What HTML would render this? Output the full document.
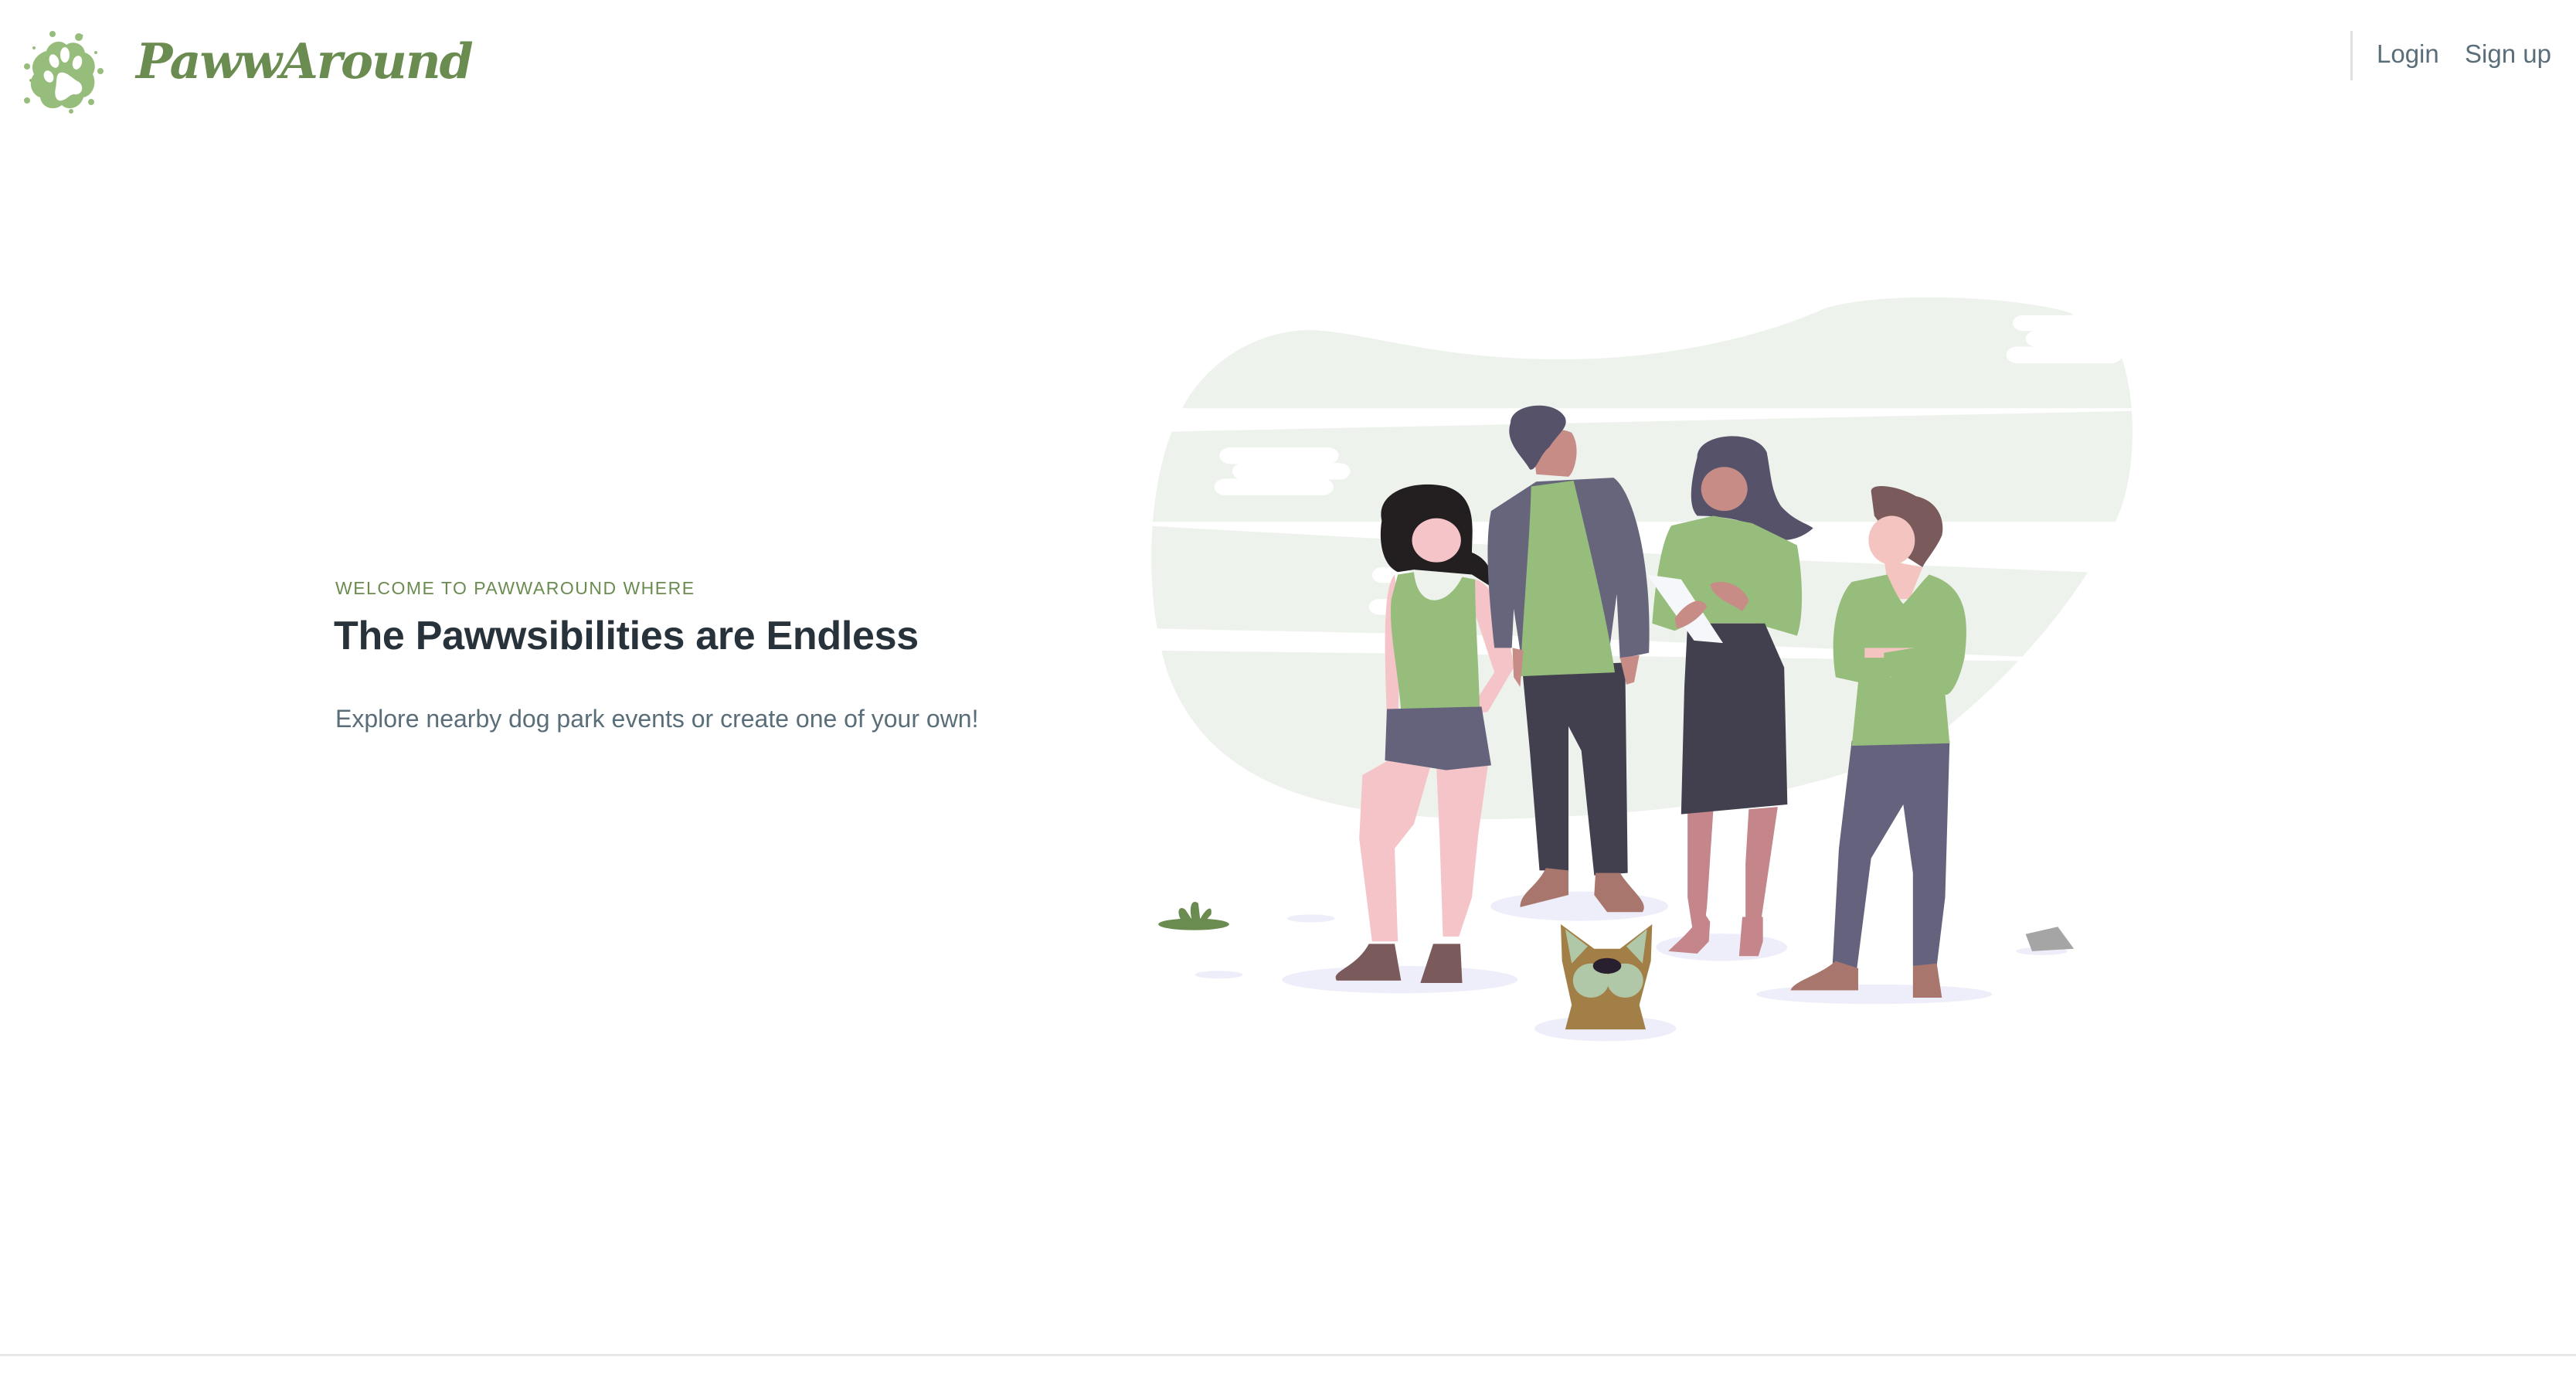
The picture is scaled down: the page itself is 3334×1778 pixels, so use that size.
<!DOCTYPE html>
<html><head><meta charset="utf-8"><style>
*{margin:0;padding:0;box-sizing:border-box}
html,body{width:3334px;height:1778px;background:#fff;overflow:hidden;position:relative;font-family:"Liberation Sans",sans-serif}
.logo-text{position:absolute;left:176px;top:24px;font-family:"DejaVu Serif","Liberation Serif",serif;font-style:italic;font-weight:bold;font-size:63px;color:#6a8c50;letter-spacing:-2px;line-height:110px}
.sep{position:absolute;left:3042px;top:40px;width:3px;height:64px;background:#e0e0e0}
.nav{position:absolute;top:46px;font-size:33px;color:#5a6e7a;line-height:48px}
.kicker{position:absolute;left:434px;top:746px;font-size:23px;letter-spacing:1.5px;color:#6a8c50;line-height:30px}
h1{position:absolute;left:432px;top:788px;font-size:52px;font-weight:bold;color:#28323a;line-height:70px;letter-spacing:-0.3px;white-space:nowrap}
.sub{position:absolute;left:434px;top:908px;font-size:32px;color:#5a6e7a;line-height:44px;white-space:nowrap}
.bottom{position:absolute;left:0;top:1752px;width:3334px;height:3px;background:#e8e8e8}
</style></head><body>
<svg style="position:absolute;left:30px;top:36px" width="110" height="112" viewBox="0 0 110 112">
<g fill="#97bd7c">
<path d="M30,30 C34,18 48,14 56,22 C64,16 78,20 80,32 C92,36 96,50 90,60 C96,72 90,88 78,90 C74,104 58,108 50,100 C40,108 24,104 22,90 C10,86 6,70 14,60 C8,48 16,34 30,30Z"/>
<circle cx="38" cy="8" r="4"/><circle cx="72" cy="12" r="5"/><circle cx="5" cy="50" r="4"/><circle cx="100" cy="56" r="4"/><circle cx="5" cy="94" r="4"/><circle cx="88" cy="96" r="4"/><circle cx="62" cy="108" r="3"/><circle cx="14" cy="26" r="2"/><circle cx="94" cy="32" r="2"/><circle cx="10" cy="68" r="2"/><circle cx="28" cy="98" r="1.5"/><circle cx="76" cy="10" r="1.5"/>
</g>
<g fill="#fff">
<ellipse cx="54" cy="35" rx="6" ry="10"/><ellipse cx="40" cy="43" rx="6" ry="9" transform="rotate(-20 40 43)"/><ellipse cx="70" cy="45" rx="6" ry="9" transform="rotate(15 70 45)"/><ellipse cx="33" cy="63" rx="6" ry="8" transform="rotate(-25 33 63)"/>
<path d="M48,58 C56,56 64,66 72,70 C80,76 76,88 66,86 C60,86 58,92 50,94 C42,96 40,86 42,78 C44,68 42,60 48,58Z"/>
</g>
</svg>
<div class="logo-text">PawwAround</div>
<div class="sep"></div>
<div class="nav" style="left:3076px">Login</div>
<div class="nav" style="left:3190px">Sign up</div>

<div class="kicker">WELCOME TO PAWWAROUND WHERE</div>
<h1>The Pawwsibilities are Endless</h1>
<div class="sub">Explore nearby dog park events or create one of your own!</div>

<svg style="position:absolute;left:1480px;top:370px" width="1300" height="990" viewBox="0 0 1560 1564" preserveAspectRatio="none">
<path d="M60,250 C100,150 180,90 260,90 C350,95 450,150 650,150 C800,150 950,110 1060,45 C1150,10 1350,20 1440,55 L1520,150 C1545,250 1540,400 1510,480 C1470,600 1380,760 1250,900 C1100,1030 850,1080 550,1090 C250,1090 100,1000 40,800 C0,650 0,400 60,250Z" fill="#eef2ec"/>
<g fill="#fff">
<polygon points="0,250 1560,250 1560,255 40,298 0,298"/>
<polygon points="0,482 1560,482 1560,490 1480,586 900,555 0,490"/>
<polygon points="0,700 600,716 1400,760 1560,760 1560,770 0,745"/>
<rect x="1350" y="60" width="200" height="32" rx="16"/><rect x="1370" y="92" width="180" height="32" rx="16"/><rect x="1340" y="124" width="180" height="34" rx="17"/>
<rect x="118" y="330" width="185" height="34" rx="17"/><rect x="138" y="362" width="183" height="34" rx="17"/><rect x="110" y="394" width="185" height="34" rx="17"/>
<rect x="355" y="575" width="60" height="32" rx="16"/><rect x="350" y="640" width="60" height="32" rx="16"/>
</g>
<g fill="#eeeefa">
<ellipse cx="398" cy="1418" rx="183" ry="28"/><ellipse cx="677" cy="1268" rx="138" ry="30"/><ellipse cx="898" cy="1352" rx="102" ry="28"/><ellipse cx="1135" cy="1448" rx="183" ry="20"/><ellipse cx="717" cy="1518" rx="110" ry="26"/><ellipse cx="260" cy="1293" rx="37" ry="8"/><ellipse cx="117" cy="1408" rx="37" ry="8"/><ellipse cx="1395" cy="1360" rx="40" ry="8"/>
</g>
<ellipse cx="78" cy="1305" rx="55" ry="12" fill="#6a8c50"/>
<path d="M60,1300 C50,1280 55,1265 65,1275 L75,1295 C70,1270 75,1252 85,1262 L88,1295 C95,1275 108,1262 105,1285 L95,1300Z" fill="#6a8c50"/>
<path d="M1370,1325 L1420,1310 L1445,1355 L1380,1360Z" fill="#a5a5a5"/>
<!-- woman 1 -->
<path d="M340,1000 L380,970 L445,985 L420,1100 L390,1150 L395,1340 L355,1340 L335,1130Z" fill="#f4c4c8"/>
<path d="M455,985 L535,980 L520,1120 L510,1250 L490,1330 L465,1330 L460,1130Z" fill="#f4c4c8"/>
<path d="M300,1420 C290,1400 330,1395 350,1345 L390,1345 L400,1420Z" fill="#7a5a5a"/>
<path d="M430,1425 L450,1345 L492,1345 L495,1425Z" fill="#7a5a5a"/>
<path d="M515,600 C550,610 570,720 575,780 L535,870 L500,880 L545,790 L510,650Z" fill="#f4c4c8"/>
<path d="M390,590 C370,620 375,760 378,890 L395,890 L400,700Z" fill="#f4c4c8"/>
<path d="M370,480 C360,420 420,395 470,410 C520,430 510,500 510,545 C540,560 545,600 540,615 L510,590 L420,580 L395,585 C370,570 365,520 370,480Z" fill="#231f20"/>
<ellipse cx="455" cy="520" rx="38" ry="45" fill="#f4c4c8"/>
<path d="M395,590 L420,585 C425,660 470,660 495,595 L515,600 C515,680 520,760 522,860 L400,870 C395,780 380,700 385,640Z" fill="#97bd7c"/>
<path d="M378,865 L525,860 L540,980 L470,990 L375,970Z" fill="#64637b"/>
<!-- man 2 -->
<path d="M588,780 L748,770 L752,1200 L700,1205 L680,950 L660,900 L660,1195 L615,1195 L600,950Z" fill="#42404f"/>
<path d="M585,1270 C585,1240 610,1230 625,1190 L660,1195 L660,1245Z" fill="#a8766c"/>
<path d="M700,1245 L702,1200 L740,1200 C760,1240 785,1260 775,1280 L720,1280Z" fill="#a8766c"/>
<path d="M540,460 L610,400 L730,392 C760,420 790,560 785,750 L740,762 L735,630 L720,780 L590,790 L575,660 L572,740 L545,740 C535,620 530,520 540,460Z" fill="#66657c"/>
<path d="M602,410 L668,398 C690,520 720,680 732,790 L585,798 C590,660 600,520 602,410Z" fill="#97bd7c"/>
<path d="M740,760 L770,755 L762,810 L750,815Z M573,740 L590,745 L585,820 L575,800Z" fill="#c78c86"/>
<path d="M605,330 C605,295 640,285 665,300 C680,330 670,380 660,390 L610,385Z" fill="#c78c86"/>
<path d="M570,280 C570,240 640,230 655,270 C660,290 645,300 630,330 C615,345 610,380 600,375 C590,350 560,320 570,280Z" fill="#55526a"/>
<!-- woman 3 -->
<path d="M845,1070 L885,1070 L875,1270 L870,1320 L855,1335 L845,1250Z" fill="#c4858b"/>
<path d="M940,1070 L985,1065 L970,1200 L960,1290 L935,1290 L935,1180Z" fill="#c4858b"/>
<path d="M815,1360 C830,1340 850,1320 870,1280 L880,1300 L878,1340 L860,1365Z M925,1370 L930,1290 L962,1290 L962,1340 L955,1370Z" fill="#c4858b"/>
<path d="M860,350 C860,300 950,290 968,340 C975,390 975,420 990,450 C1010,480 1030,485 1040,495 C1020,520 985,530 965,505 C945,480 900,470 860,470 C845,450 850,400 860,350Z" fill="#55526a"/>
<ellipse cx="902" cy="415" rx="36" ry="45" fill="#c78c86"/>
<path d="M820,490 L885,470 L945,485 L1015,530 C1025,600 1025,680 1015,715 L950,690 L930,650 L985,640 L975,690 L850,690 L825,705 L790,690 C795,600 805,520 820,490Z" fill="#97bd7c"/>
<path d="M845,690 L965,690 L995,780 L1000,1060 L835,1080 L840,820Z" fill="#42404f"/>
<path d="M782,590 L835,600 L900,730 L855,725 Z" fill="#f5f7fa"/>
<path d="M825,680 C840,650 865,630 875,655 C865,680 840,700 828,700Z M880,610 C900,595 935,615 940,645 L930,665 C915,650 885,640 880,610Z" fill="#c78c86"/>
<!-- man 4 -->
<path d="M1100,930 L1252,930 L1245,1250 L1232,1390 L1195,1390 L1195,1200 L1180,1060 L1130,1170 L1108,1395 L1070,1390 L1080,1150Z" fill="#64627c"/>
<path d="M1005,1440 C1010,1420 1050,1410 1075,1380 L1110,1395 L1110,1440Z M1195,1390 L1232,1385 L1240,1455 L1195,1455Z" fill="#a8766c"/>
<path d="M1130,420 C1130,400 1175,410 1200,430 C1235,440 1245,480 1240,510 C1230,540 1215,560 1210,575 L1180,550 L1135,470Z" fill="#7a5a5a"/>
<ellipse cx="1162" cy="520" rx="36" ry="50" fill="#f4c4c0"/>
<path d="M1150,560 L1210,575 L1190,640 L1160,640Z" fill="#f4c4c0"/>
<path d="M1100,605 L1155,590 C1165,620 1175,645 1180,650 C1195,630 1205,610 1220,590 C1270,610 1285,660 1275,760 C1265,820 1250,840 1245,835 L1252,935 L1100,940 L1110,810 L1075,800 C1065,720 1075,640 1100,605Z" fill="#97bd7c"/>
<path d="M1120,740 L1215,740 L1218,770 L1175,790 L1160,800 L1150,760 L1120,760Z" fill="#f4c4c0"/>
<path d="M1150,750 L1220,735 L1230,780 L1175,810 L1150,790Z" fill="#97bd7c"/>
<!-- dog -->
<path d="M648,1305 L700,1355 L740,1355 L790,1305 L788,1380 L770,1470 L780,1520 L655,1520 L665,1470 L650,1380Z" fill="#a37f48"/>
<path d="M655,1315 L690,1350 L665,1385Z M782,1315 L750,1350 L775,1385Z" fill="#b0c8a8"/>
<ellipse cx="695" cy="1420" rx="28" ry="35" fill="#b0c8a8"/><ellipse cx="748" cy="1420" rx="28" ry="35" fill="#b0c8a8"/>
<ellipse cx="720" cy="1390" rx="22" ry="16" fill="#2a1f2f"/>
</svg>
<div class="bottom"></div>
</body></html>
